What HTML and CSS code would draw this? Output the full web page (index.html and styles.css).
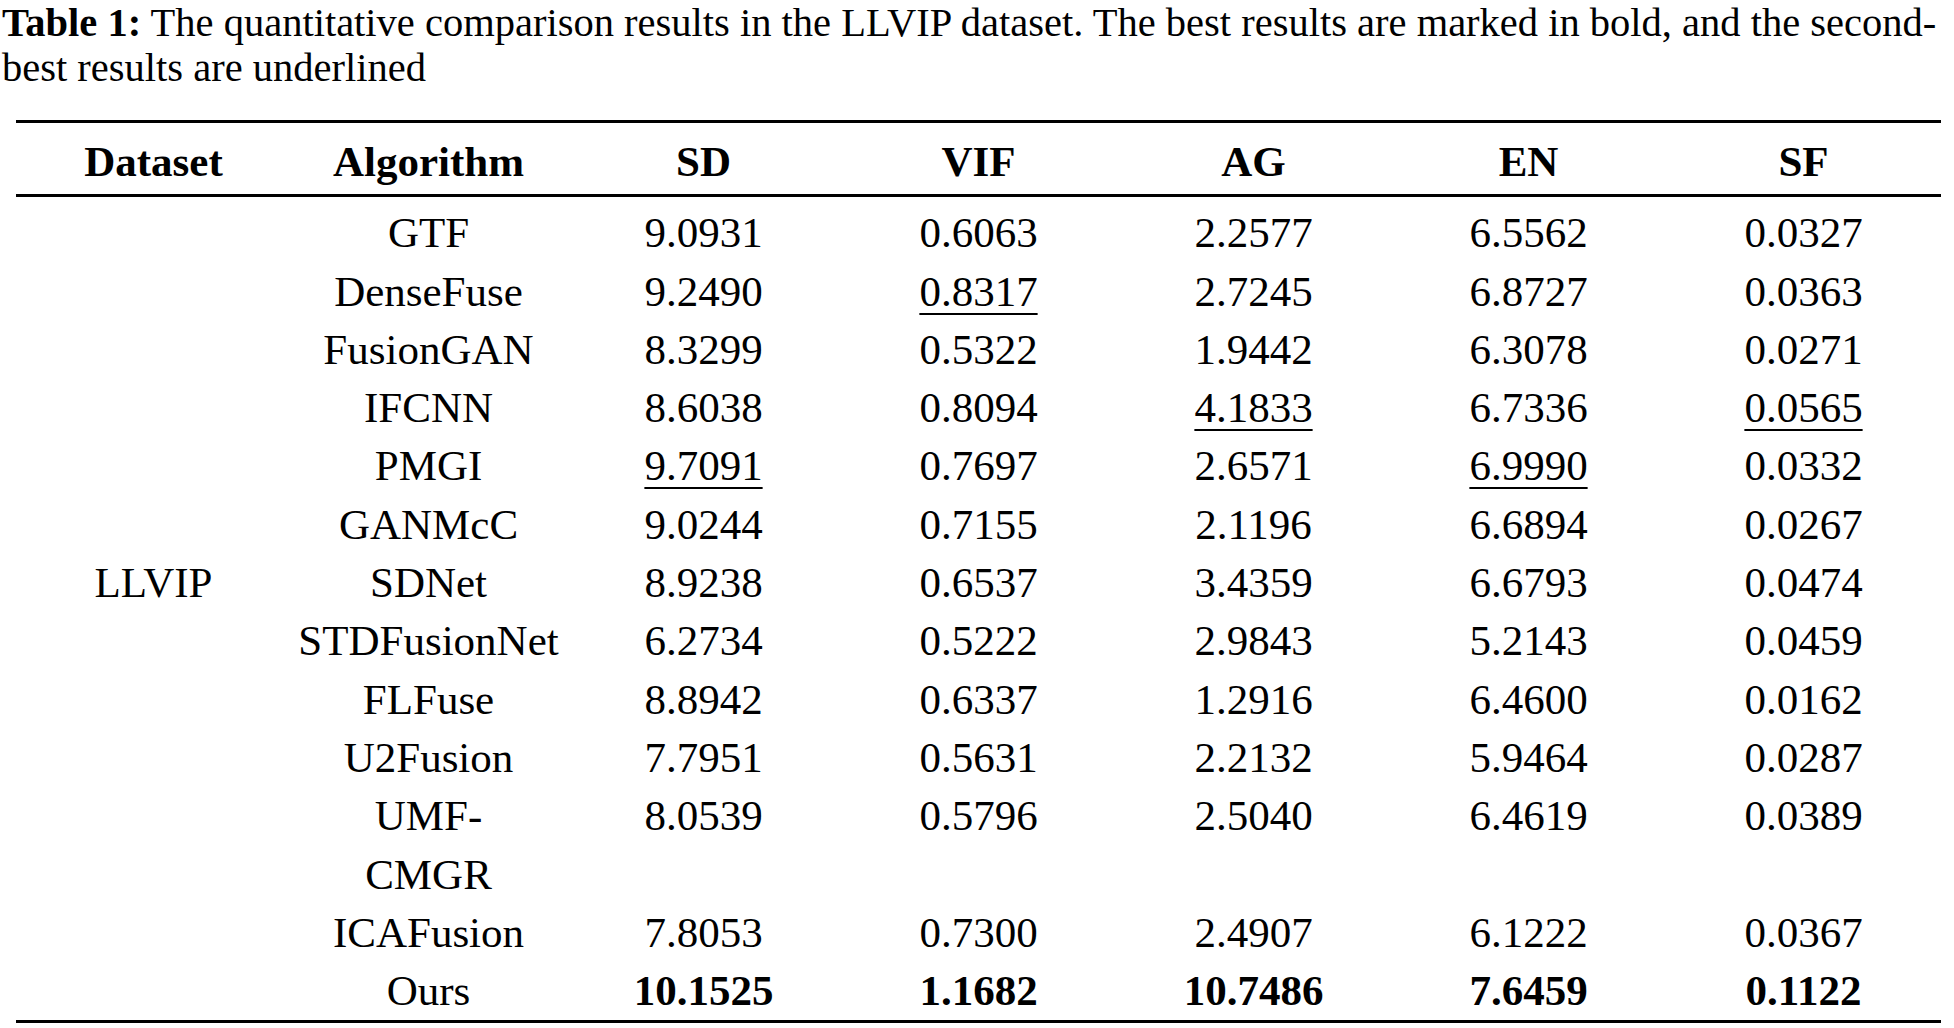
FILE: index.html
```html
<!DOCTYPE html>
<html>
<head>
<meta charset="utf-8">
<link rel="stylesheet" href="styles.css">
</head>
<body>
<p class="caption"><b>Table 1:</b> The quantitative comparison results in the LLVIP dataset. The best results are marked in bold, and the second-best results are underlined</p>
<table class="results">
<colgroup><col><col><col><col><col><col><col></colgroup>
<thead>
<tr><th>Dataset</th><th>Algorithm</th><th>SD</th><th>VIF</th><th>AG</th><th>EN</th><th>SF</th></tr>
</thead>
<tbody>
<tr class="first"><td></td><td>GTF</td><td>9.0931</td><td>0.6063</td><td>2.2577</td><td>6.5562</td><td>0.0327</td></tr>
<tr><td></td><td>DenseFuse</td><td>9.2490</td><td><span class="u">0.8317</span></td><td>2.7245</td><td>6.8727</td><td>0.0363</td></tr>
<tr><td></td><td>FusionGAN</td><td>8.3299</td><td>0.5322</td><td>1.9442</td><td>6.3078</td><td>0.0271</td></tr>
<tr><td></td><td>IFCNN</td><td>8.6038</td><td>0.8094</td><td><span class="u">4.1833</span></td><td>6.7336</td><td><span class="u">0.0565</span></td></tr>
<tr><td></td><td>PMGI</td><td><span class="u">9.7091</span></td><td>0.7697</td><td>2.6571</td><td><span class="u">6.9990</span></td><td>0.0332</td></tr>
<tr><td></td><td>GANMcC</td><td>9.0244</td><td>0.7155</td><td>2.1196</td><td>6.6894</td><td>0.0267</td></tr>
<tr><td>LLVIP</td><td>SDNet</td><td>8.9238</td><td>0.6537</td><td>3.4359</td><td>6.6793</td><td>0.0474</td></tr>
<tr><td></td><td>STDFusionNet</td><td>6.2734</td><td>0.5222</td><td>2.9843</td><td>5.2143</td><td>0.0459</td></tr>
<tr><td></td><td>FLFuse</td><td>8.8942</td><td>0.6337</td><td>1.2916</td><td>6.4600</td><td>0.0162</td></tr>
<tr><td></td><td>U2Fusion</td><td>7.7951</td><td>0.5631</td><td>2.2132</td><td>5.9464</td><td>0.0287</td></tr>
<tr class="top"><td></td><td>UMF-<br>CMGR</td><td>8.0539</td><td>0.5796</td><td>2.5040</td><td>6.4619</td><td>0.0389</td></tr>
<tr><td></td><td>ICAFusion</td><td>7.8053</td><td>0.7300</td><td>2.4907</td><td>6.1222</td><td>0.0367</td></tr>
<tr class="last"><td></td><td>Ours</td><td><b>10.1525</b></td><td><b>1.1682</b></td><td><b>10.7486</b></td><td><b>7.6459</b></td><td><b>0.1122</b></td></tr>
</tbody>
</table>
</body>
</html>
```

FILE: styles.css
```css
html, body {
  margin: 0;
  padding: 0;
  background: #fff;
  color: #000;
}

body {
  font-family: "Liberation Serif", "Times New Roman", serif;
}

.caption {
  margin: 0;
  padding: 0 0 0 2px;
  font-size: 40.5px;
  line-height: 45px;
  width: 1952px;
}

.caption b {
  font-weight: bold;
}

.results {
  margin: 30px 0 0 16px;
  width: 1925px;
  table-layout: fixed;
  border-collapse: separate;
  border-spacing: 0;
  font-size: 43px;
  line-height: 58.3px;
}

.results col {
  width: 275px;
}

.results th,
.results td {
  padding: 0;
  text-align: center;
  vertical-align: middle;
}

.results th {
  font-weight: bold;
  border-top: 3px solid #000;
  border-bottom: 3px solid #000;
  padding-top: 10px;
  padding-bottom: 3px;
}

.results tr.first td {
  padding-top: 7px;
}

.results tr.top td {
  vertical-align: top;
}

.results tr.last td {
  border-bottom: 3px solid #000;
}

.u {
  text-decoration: underline;
  text-decoration-thickness: 2px;
  text-underline-offset: 7px;
}
```
